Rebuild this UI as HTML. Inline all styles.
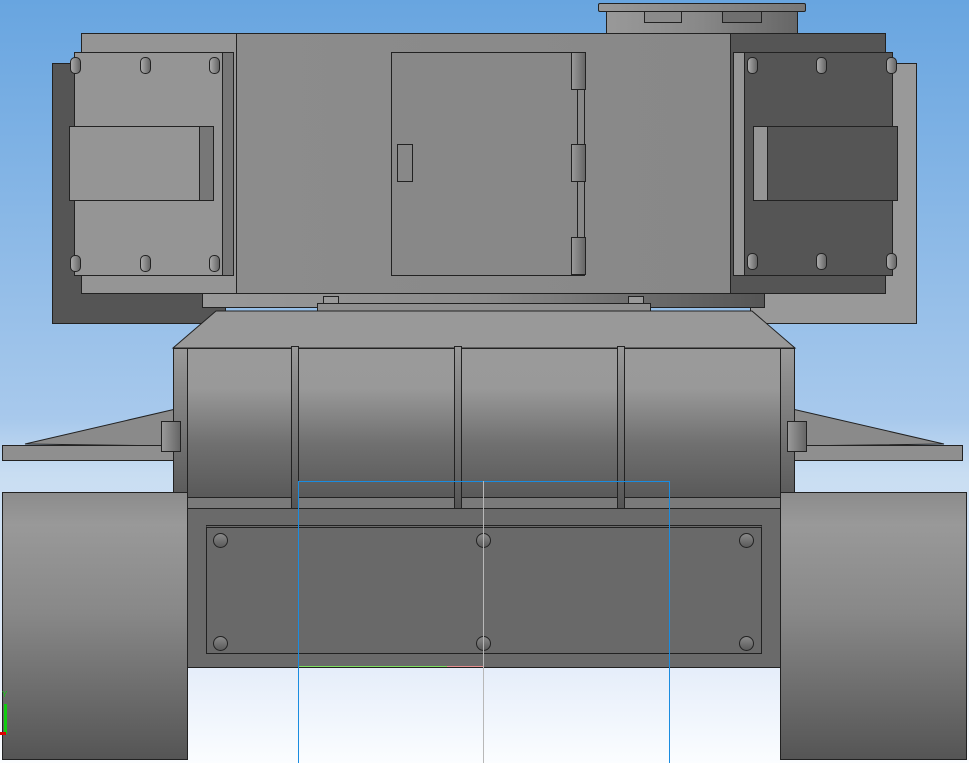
<!DOCTYPE html>
<html style="width:969px;height:763px;overflow:hidden;background:#fbfdff"><head><style>
*{margin:0;padding:0;box-sizing:border-box}
body{width:969px;height:763px;overflow:hidden;position:relative;font-family:"Liberation Sans",sans-serif;
background:linear-gradient(#68a5e0 0%,#a8c9ec 55%,#c8ddf2 62%,#e6eefa 88%,#fbfdff 100%)}
div{position:absolute}
.b{border:1px solid #222}
.bolt{width:11px;height:17px;border:1px solid #222;border-radius:5px;background:linear-gradient(90deg,#aaa,#666)}
.rb{width:15px;height:15px;border:1px solid #222;border-radius:50%;background:linear-gradient(#8a8a8a,#5a5a5a)}
</style></head><body>
<div class="b" style="left:52px;top:63px;width:174px;height:261px;background:#555"></div>
<div class="b" style="left:750px;top:63px;width:167px;height:261px;background:#999"></div>
<div class="b" style="left:606px;top:10px;width:192px;height:24px;background:linear-gradient(90deg,#999,#888 50%,#666)"></div>
<div class="b" style="left:598px;top:3px;width:208px;height:9px;background:linear-gradient(90deg,#999,#777);border-radius:2px"></div>
<div class="b" style="left:644px;top:11px;width:38px;height:12px;background:#8a8a8a"></div>
<div class="b" style="left:722px;top:11px;width:40px;height:12px;background:#6f6f6f"></div>
<div class="b" style="left:81px;top:33px;width:156px;height:261px;background:#959595"></div>
<div class="b" style="left:236px;top:33px;width:495px;height:261px;background:linear-gradient(90deg,#8c8c8c,#888)"></div>
<div class="b" style="left:730px;top:33px;width:156px;height:261px;background:#555"></div>
<div class="b" style="left:74px;top:52px;width:160px;height:224px;background:#959595"></div>
<div class="b" style="left:222px;top:52px;width:12px;height:224px;background:#777"></div>
<div class="b" style="left:69px;top:126px;width:145px;height:75px;background:#959595"></div>
<div class="b" style="left:199px;top:126px;width:15px;height:75px;background:#777"></div>
<div class="b" style="left:733px;top:52px;width:160px;height:224px;background:#555"></div>
<div class="b" style="left:733px;top:52px;width:12px;height:224px;background:#959595"></div>
<div class="b" style="left:753px;top:126px;width:145px;height:75px;background:#555"></div>
<div class="b" style="left:753px;top:126px;width:15px;height:75px;background:#959595"></div>
<div class="bolt" style="left:70px;top:57px"></div><div class="bolt" style="left:140px;top:57px"></div><div class="bolt" style="left:209px;top:57px"></div>
<div class="bolt" style="left:70px;top:255px"></div><div class="bolt" style="left:140px;top:255px"></div><div class="bolt" style="left:209px;top:255px"></div>
<div class="bolt" style="left:747px;top:57px"></div><div class="bolt" style="left:816px;top:57px"></div><div class="bolt" style="left:886px;top:57px"></div>
<div class="bolt" style="left:747px;top:253px"></div><div class="bolt" style="left:816px;top:253px"></div><div class="bolt" style="left:886px;top:253px"></div>
<div class="b" style="left:391px;top:52px;width:194px;height:224px;background:#888"></div>
<div style="left:577px;top:60px;width:1px;height:210px;background:#222"></div>
<div class="b" style="left:571px;top:52px;width:15px;height:38px;background:linear-gradient(90deg,#999,#666)"></div>
<div class="b" style="left:571px;top:144px;width:15px;height:38px;background:linear-gradient(90deg,#999,#666)"></div>
<div class="b" style="left:571px;top:237px;width:15px;height:38px;background:linear-gradient(90deg,#999,#666)"></div>
<div class="b" style="left:397px;top:144px;width:16px;height:38px;background:#888"></div>
<div class="b" style="left:202px;top:293px;width:563px;height:15px;background:linear-gradient(90deg,#999,#8a8a8a 50%,#555)"></div>
<div class="b" style="left:317px;top:303px;width:334px;height:9px;background:#8f8f8f"></div>
<div class="b" style="left:323px;top:296px;width:16px;height:8px;background:#999"></div>
<div class="b" style="left:628px;top:296px;width:16px;height:8px;background:#999"></div>
<svg style="position:absolute;left:0;top:0" width="969" height="763">
<polygon points="216,311 752,311 795,348 173,348" fill="#999" stroke="#222"/>
<polygon points="25,444 180,408 180,446" fill="#8a8a8a" stroke="#222"/>
<polygon points="944,444 788,408 788,446" fill="#8a8a8a" stroke="#222"/>
</svg>
<div class="b" style="left:2px;top:445px;width:180px;height:16px;background:#8f8f8f"></div>
<div class="b" style="left:786px;top:445px;width:177px;height:16px;background:#8f8f8f"></div>
<div class="b" style="left:180px;top:348px;width:608px;height:160px;background:linear-gradient(#9a9a9a 0%,#999 25%,#707070 60%,#555 100%)"></div>
<div class="b" style="left:180px;top:497px;width:608px;height:12px;background:#7a7a7a"></div>
<div class="b" style="left:173px;top:348px;width:15px;height:161px;background:linear-gradient(#999,#555)"></div>
<div class="b" style="left:780px;top:348px;width:15px;height:161px;background:linear-gradient(#999,#555)"></div>
<div class="b" style="left:161px;top:421px;width:20px;height:31px;background:linear-gradient(90deg,#999,#666)"></div>
<div class="b" style="left:787px;top:421px;width:20px;height:31px;background:linear-gradient(90deg,#999,#666)"></div>
<div class="b" style="left:291px;top:346px;width:8px;height:163px;background:linear-gradient(#999,#555)"></div>
<div class="b" style="left:454px;top:346px;width:8px;height:163px;background:linear-gradient(#999,#555)"></div>
<div class="b" style="left:617px;top:346px;width:8px;height:163px;background:linear-gradient(#999,#555)"></div>
<div class="b" style="left:2px;top:492px;width:186px;height:268px;background:linear-gradient(#8c8c8c,#999 12%,#888 45%,#555 100%)"></div>
<div class="b" style="left:780px;top:492px;width:187px;height:268px;background:linear-gradient(#8c8c8c,#999 12%,#888 45%,#555 100%)"></div>
<div class="b" style="left:187px;top:508px;width:594px;height:160px;background:#6a6a6a"></div>
<div class="b" style="left:206px;top:525px;width:556px;height:129px;background:#696969;border-top:3px double #222"></div>
<div class="rb" style="left:213px;top:533px"></div><div class="rb" style="left:476px;top:533px"></div><div class="rb" style="left:739px;top:533px"></div>
<div class="rb" style="left:213px;top:636px"></div><div class="rb" style="left:476px;top:636px"></div><div class="rb" style="left:739px;top:636px"></div>
<div style="left:298px;top:481px;width:372px;height:282px;border:1px solid #1a8ce0;border-bottom:none"></div>
<div style="left:483px;top:481px;width:1px;height:282px;background:#b8b8b8"></div>
<div style="left:299px;top:666px;width:148px;height:1px;background:#7ee060"></div>
<div style="left:447px;top:666px;width:36px;height:1px;background:#e89090"></div>
<div style="left:4px;top:704px;width:3px;height:30px;background:#1c1"></div>
<div style="left:0;top:732px;width:6px;height:3px;background:#d00"></div>
<div style="left:2px;top:690px;font-size:8px;color:#1c1">Y</div>
</body></html>
